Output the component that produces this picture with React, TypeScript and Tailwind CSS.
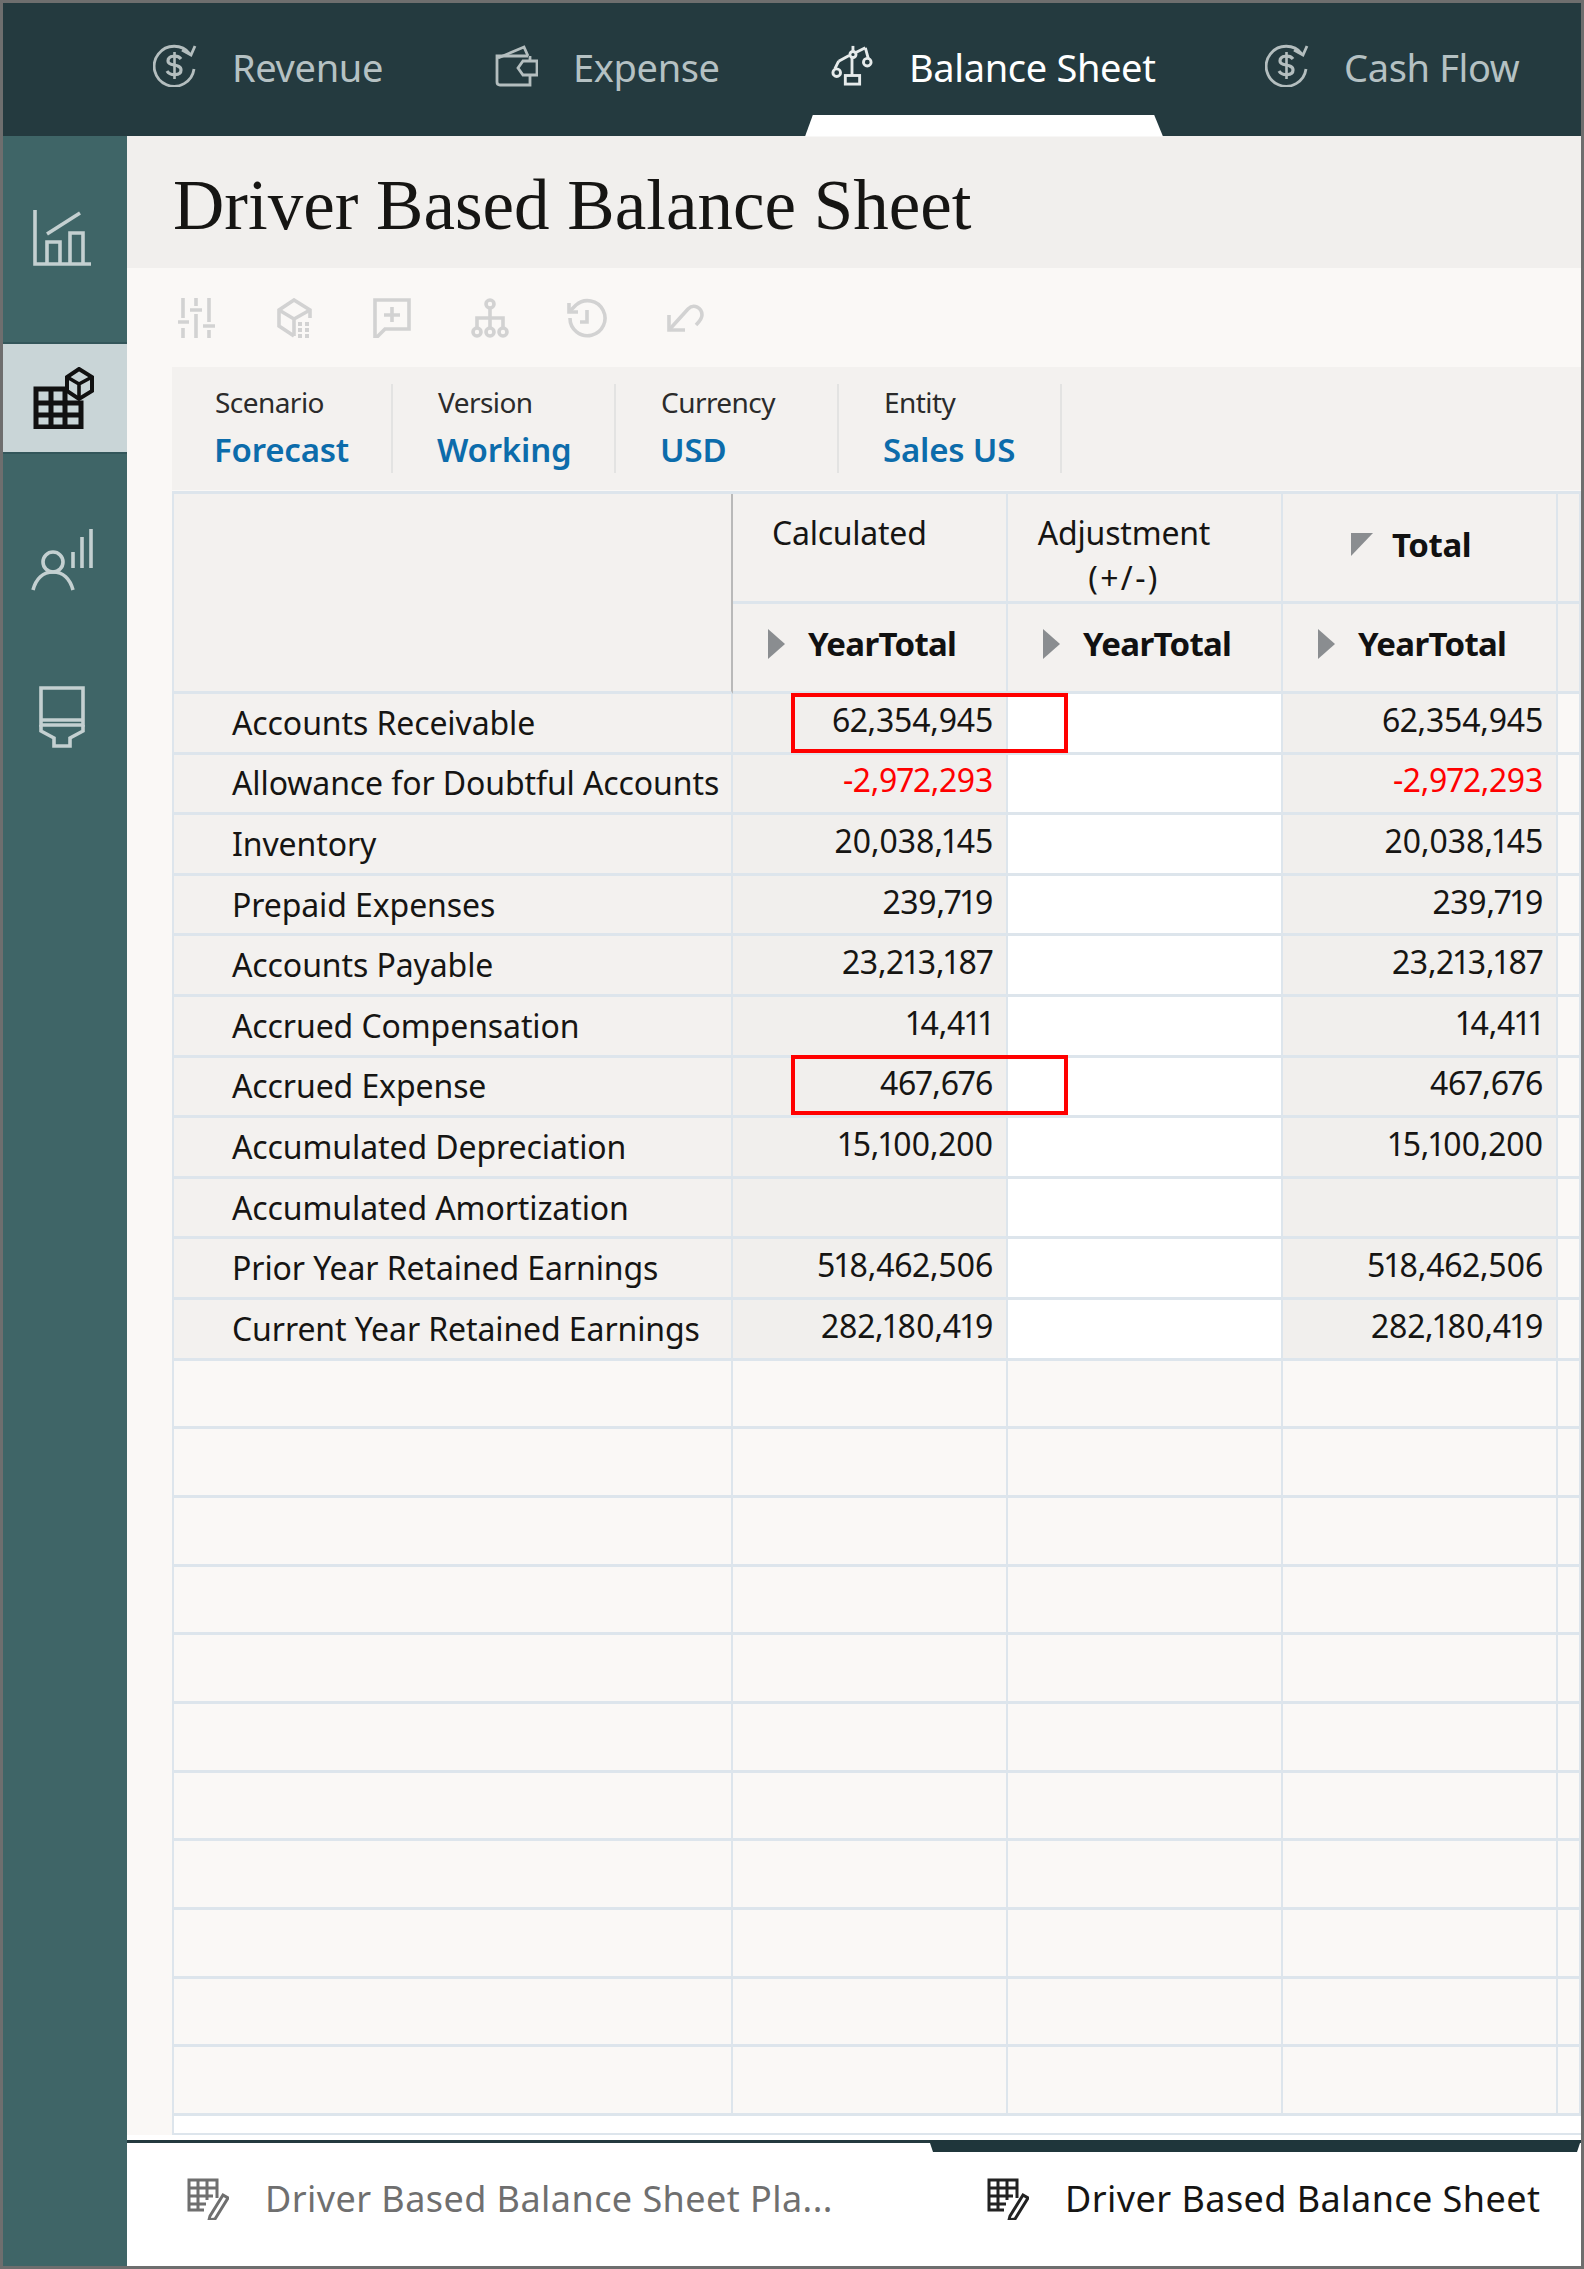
import React from "react";

const sans = "[font-family:'Noto_Sans','Open_Sans',sans-serif]";

function DollarCycle() {
  return (
    <svg viewBox="0 0 44 44" className="h-[44px] w-[44px] shrink-0 text-[#b4bebf]" fill="none" stroke="currentColor" strokeWidth="2.8">
      <path d="M37 11 A20 20 0 1 0 41 26" />
      <path d="M29 7 L38 12 L42 3" />
      <path d="M28 16 C25 12 15 12 15 18 C15 24 28 20 28 27 C28 33 17 33 14 28" strokeWidth="3.2" />
      <path d="M21.5 9 V36" strokeWidth="2.6" />
    </svg>
  );
}

function Wallet() {
  return (
    <svg viewBox="0 0 45 44" className="h-[44px] w-[45px] shrink-0 text-[#b4bebf]" fill="none" stroke="currentColor" strokeWidth="2.8">
      <path d="M5 15 L31 4 L35 13" />
      <path d="M35 13 H4 V39 C4 41 5 42 7 42 H37 V32" />
      <path d="M37 13 V18" />
      <path d="M37 18 H44 V32 H30 L25 25 L30 18 H37" />
    </svg>
  );
}

function Scale() {
  return (
    <svg viewBox="0 0 44 44" className="h-[44px] w-[42px] shrink-0 text-[#e6ebeb]" fill="none" stroke="currentColor" strokeWidth="3">
      <rect x="15" y="33" width="15" height="9" />
      <path d="M22 33 V14" />
      <circle cx="23" cy="11" r="3.2" />
      <path d="M26 9 L36 4 M19 12 L8 18" />
      <path d="M23 2 V7" />
      <path d="M8 18 L4 26 M36 4 L39 15" />
      <circle cx="6" cy="30" r="4" />
      <circle cx="38" cy="19" r="4" />
    </svg>
  );
}

function BarChart() {
  return (
    <svg viewBox="0 0 58 56" className="h-[56px] w-[58px] text-[#c4d0d1]" fill="none" stroke="currentColor" strokeWidth="3.6">
      <path d="M2 0 V54 H58" />
      <path d="M14 24 L47 3" />
      <path d="M14 54 V32 H27 V54" />
      <path d="M37 54 V23 H50 V54" />
    </svg>
  );
}

function GridCube() {
  return (
    <svg viewBox="0 0 62 62" className="h-[62px] w-[62px] text-[#111111]" fill="none" stroke="currentColor" strokeWidth="5">
      <path d="M3 22 H32 V36 H48 V60 H3 Z" />
      <path d="M3 36 H32 V60 M3 48 H48 M18 22 V60" />
      <path d="M46 2 L59 10 V24 L46 32 L34 24 V10 Z" strokeWidth="4" />
      <path d="M34 10 L46 17 L59 10 M46 17 V31" strokeWidth="3.6" />
    </svg>
  );
}

function PersonBars() {
  return (
    <svg viewBox="0 0 62 62" className="h-[62px] w-[62px] text-[#c4d0d1]" fill="none" stroke="currentColor" strokeWidth="3.6">
      <ellipse cx="22" cy="33" rx="10" ry="10" />
      <path d="M2 61 C5 50 12 43 22 43 C32 43 39 50 42 61" />
      <path d="M42 23 V39 M51 8 V39 M60 0 V39" />
    </svg>
  );
}

function Funnel() {
  return (
    <svg viewBox="0 0 48 62" className="h-[62px] w-[48px] text-[#c4d0d1]" fill="none" stroke="currentColor" strokeWidth="3.6">
      <path d="M3 2 H45 V39 H3 Z" />
      <path d="M3 39 V45 L16 52 V60 H32 V52 L45 45 V39" />
      <path d="M3 34 H45" />
    </svg>
  );
}

function ToolSliders() {
  return (
    <svg viewBox="0 0 40 40" className="h-[40px] w-[40px]" fill="none" stroke="#d2d2d2" strokeWidth="3.6">
      <path d="M6 0 V20 M6 30 V40 M1 24 H12" />
      <path d="M19 0 V8 M19 16 V40 M13 12 H25" />
      <path d="M32 0 V24 M32 32 V40 M26 28 H38" />
    </svg>
  );
}
function ToolCube() {
  return (
    <svg viewBox="0 0 36 40" className="h-[40px] w-[36px]" fill="none" stroke="#d2d2d2" strokeWidth="3.6">
      <path d="M17 38 L2 28 V12 L17 2 L33 12 V20" />
      <path d="M2 12 L17 21 L33 12 M17 21 V38" />
      <g fill="#d2d2d2" stroke="none">
        <rect x="21" y="24" width="4" height="4" /><rect x="28" y="24" width="4" height="4" />
        <rect x="21" y="30" width="4" height="4" /><rect x="28" y="30" width="4" height="4" />
        <rect x="21" y="36" width="4" height="4" /><rect x="28" y="36" width="4" height="4" />
      </g>
    </svg>
  );
}
function ToolComment() {
  return (
    <svg viewBox="0 0 38 40" className="h-[40px] w-[38px]" fill="none" stroke="#d2d2d2" strokeWidth="3.6">
      <path d="M2 2 H36 V31 H12 L4 39 H2 Z" />
      <path d="M19 9 V24 M11 17 H27" />
    </svg>
  );
}
function ToolOrg() {
  return (
    <svg viewBox="0 0 38 40" className="h-[40px] w-[38px]" fill="none" stroke="#d2d2d2" strokeWidth="3.6">
      <circle cx="19" cy="6" r="4" />
      <path d="M19 10 V20 M6 30 V20 H32 V30 M19 20 V30" />
      <circle cx="6" cy="34" r="4" /><circle cx="19" cy="34" r="4" /><circle cx="32" cy="34" r="4" />
    </svg>
  );
}
function ToolHistory() {
  return (
    <svg viewBox="0 0 40 40" className="h-[40px] w-[40px]" fill="none" stroke="#d2d2d2" strokeWidth="3.6">
      <path d="M3 20 A17.5 17.5 0 1 0 9 7 L2 14" />
      <path d="M2 5 V14 H11" />
      <path d="M20 12 V24 H13" />
    </svg>
  );
}
function ToolUndo() {
  return (
    <svg viewBox="0 0 38 30" className="h-[30px] w-[38px]" fill="none" stroke="#d2d2d2" strokeWidth="3.6">
      <path d="M3 27 L22 6 C28 0 36 5 36 12 C36 16 33 19 30 22" />
      <path d="M3 12 V27 H19" />
    </svg>
  );
}

function SheetPencil({ dark }: { dark: boolean }) {
  const c = dark ? "#222222" : "#6f6f6f";
  return (
    <svg viewBox="0 0 42 42" className="h-[42px] w-[42px] shrink-0" fill="none" stroke={c} strokeWidth="3">
      <path d="M30 20 V2 H2 V32 H17" />
      <path d="M2 10 H30 M2 18 H26 M2 26 H19 M11 2 V32 M20 2 V22" />
      <path d="M23 38 L36 17 L41 20 L28 41 L22 42 Z" />
    </svg>
  );
}

const tabText = "mt-[4px] whitespace-nowrap text-[38px] leading-[48px] tracking-[-0.35px]";

function Tab({ icon, label, w, ml }: { icon: React.ReactNode; label: string; w: string; ml: string }) {
  return (
    <div className={`flex items-center gap-[35px] ${ml}`}>
      {icon}
      <span className={`${w} ${tabText} text-[#b5c1c3]`}>{label}</span>
    </div>
  );
}

const rows = [
  ["Accounts Receivable", "62,354,945"],
  ["Allowance for Doubtful Accounts", "-2,972,293"],
  ["Inventory", "20,038,145"],
  ["Prepaid Expenses", "239,719"],
  ["Accounts Payable", "23,213,187"],
  ["Accrued Compensation", "14,411"],
  ["Accrued Expense", "467,676"],
  ["Accumulated Depreciation", "15,100,200"],
  ["Accumulated Amortization", ""],
  ["Prior Year Retained Earnings", "518,462,506"],
  ["Current Year Retained Earnings", "282,180,419"],
];

const filters = [
  ["Scenario", "Forecast"],
  ["Version", "Working"],
  ["Currency", "USD"],
  ["Entity", "Sales US"],
];

const empties = Array.from({ length: 11 }, (_, i) => i);

const cell = "border-r-2 border-b-[3px] border-[#dde5ec]";

function Triangle() {
  return <div className="h-0 w-0 shrink-0 border-y-[15px] border-l-[17px] border-y-transparent border-l-[#8a8d90]" />;
}

function YearTotal() {
  return (
    <div className={`flex items-center gap-[23px] bg-[#f3f1ef] pl-[35px] pb-[8px] ${cell}`}>
      <Triangle />
      <span className="text-[33px] font-bold leading-none tracking-[-0.7px] text-[#111]">YearTotal</span>
    </div>
  );
}

export default function App() {
  return (
    <div className={`flex h-[2269px] w-[1584px] flex-col overflow-hidden border-y-[3px] border-x-[3px] border-[#6e6e6e] bg-white ${sans}`}>
      <header className="flex h-[133px] shrink-0 items-center bg-[#243a3f] pb-[10px]">
        <Tab ml="ml-[150px]" w="w-[151px]" icon={<DollarCycle />} label="Revenue" />
        <Tab ml="ml-[110px]" w="w-[148px]" icon={<Wallet />} label="Expense" />
        <div className="relative ml-[110px] flex items-center gap-[36px]">
          <Scale />
          <span className={`w-[246px] ${tabText} text-white`}>Balance Sheet</span>
          <div className="absolute top-[76px] left-[-26px] h-[22px] w-[358px] bg-white [clip-path:polygon(8px_0,349px_0,100%_100%,0_100%)]" />
        </div>
        <Tab ml="ml-[110px]" w="w-[178px]" icon={<DollarCycle />} label="Cash Flow" />
      </header>

      <div className="flex min-h-0 flex-1">
        <aside className="flex w-[124px] shrink-0 flex-col bg-[#3f6567]">
          <div className="flex h-[206px] justify-center pt-[74px] pr-[7px]"><BarChart /></div>
          <div className="flex h-[112px] items-center justify-center border-y-2 border-[#33565a] bg-[#c9d5d7] pr-[3px]"><GridCube /></div>
          <div className="flex justify-center pt-[75px] pr-[6px]"><PersonBars /></div>
          <div className="flex justify-center pt-[95px] pr-[6px]"><Funnel /></div>
        </aside>

        <main className="flex min-w-0 flex-1 flex-col bg-[#faf8f6]">
          <div className="flex h-[132px] shrink-0 items-center bg-[#f1efed] pl-[46px] pt-[6px]">
            <h1 className="text-[71px] leading-none font-normal text-[#161513] [font-family:'Liberation_Serif',serif]">Driver Based Balance Sheet</h1>
          </div>

          <div className="flex h-[99px] shrink-0 items-center pl-[50px]">
            <ToolSliders />
            <div className="ml-[60px]"><ToolCube /></div>
            <div className="ml-[60px]"><ToolComment /></div>
            <div className="ml-[60px]"><ToolOrg /></div>
            <div className="ml-[58px]"><ToolHistory /></div>
            <div className="ml-[59px]"><ToolUndo /></div>
          </div>

          <div className="ml-[45px] flex h-[123px] shrink-0 bg-[#f3f1ef] pt-[17px]">
            {filters.map(([k, v], i) => (
              <div key={k} className={`h-[89px] border-r-2 border-[#e3e3e2] ${i === 0 ? "w-[221px] pl-[43px]" : "w-[223px] pl-[45px]"}`}>
                <div className="text-[28px] leading-[36px] tracking-[-0.55px] text-[#2b2b2b]">{k}</div>
                <div className="mt-[9px] -ml-[1px] text-[33px] font-semibold leading-[42px] tracking-[-0.2px] text-[#0c6cab]">{v}</div>
              </div>
            ))}
          </div>

          <div className="relative mt-[1px] ml-[45px] grid shrink-0 grid-cols-[559px_275px_275px_275px_1fr] grid-rows-[110px_90px] border-t-[3px] border-l-2 border-[#dde5ec] text-[32px] text-[#161513]">
            <div className="row-span-2 border-r-2 border-b-[3px] border-r-[#b9b9b9] border-b-[#dde5ec] bg-[#f3f1ef]" />
            <div className={`bg-[#f3f1ef] pl-[39px] pt-[18px] leading-[42px] tracking-[-0.25px] ${cell}`}>Calculated</div>
            <div className={`bg-[#f3f1ef] pt-[16px] text-center leading-[45px] tracking-[-0.2px] ${cell}`}>
              <div className="pr-[41px]">Adjustment</div>
              <div className="pr-[41px] tracking-[2.4px]">(+/-)</div>
            </div>
            <div className={`flex items-center bg-[#f3f1ef] pl-[68px] pb-[6px] ${cell}`}>
              <div className="h-0 w-0 border-t-[23px] border-r-[22px] border-t-[#8a8d90] border-r-transparent" />
              <span className="ml-[19px] text-[33px] font-bold tracking-[-0.4px] text-[#111]">Total</span>
            </div>
            <div className={`bg-[#f3f1ef] ${cell}`} />
            <YearTotal />
            <YearTotal />
            <YearTotal />
            <div className={`bg-[#f3f1ef] ${cell}`} />

            {rows.map(([label, value]) => {
              const neg = value.startsWith("-");
              return (
                <React.Fragment key={label}>
                  <div className={`flex h-[60.6px] items-center whitespace-nowrap bg-[#f3f1ef] pl-[58px] tracking-[-0.1px] ${cell}`}>{label}</div>
                  <div className={`flex items-center justify-end bg-[#f1efed] pr-[13px] pb-[6px] tracking-[-0.2px] proportional-nums ${neg ? "text-[#ff0000]" : ""} ${cell}`}>{value}</div>
                  <div className={`bg-white ${cell}`} />
                  <div className={`flex items-center justify-end bg-[#f1efed] pr-[13px] pb-[6px] tracking-[-0.2px] proportional-nums ${neg ? "text-[#ff0000]" : ""} ${cell}`}>{value}</div>
                  <div className={cell} />
                </React.Fragment>
              );
            })}

            {empties.map((i) => (
              <React.Fragment key={i}>
                <div className={`h-[68.7px] ${cell}`} />
                <div className={cell} />
                <div className={cell} />
                <div className={cell} />
                <div className={cell} />
              </React.Fragment>
            ))}

            <div className="col-span-5 h-[19px] border-b-2 border-[#dde5ec] bg-white" />

            <div className="pointer-events-none absolute top-[199px] left-[617px] h-[60px] w-[277px] border-4 border-[#ff0000]" />
            <div className="pointer-events-none absolute top-[561px] left-[617px] h-[60px] w-[277px] border-4 border-[#ff0000]" />
          </div>

          <div className="h-[5px] shrink-0 bg-white" />

          <footer className="relative flex flex-1 items-center border-t-[3px] border-[#243a3f] bg-white pb-[12px] pl-[60px] text-[36px]">
            <div className="absolute top-[-3px] right-0 h-[12px] w-[652px] bg-[#1f363b] [clip-path:polygon(0_0,100%_0,calc(100%-4px)_100%,4px_100%)]" />
            <div className="flex w-[800px] items-center gap-[36px] text-[#6f6f6f]">
              <SheetPencil dark={false} />
              <span className="tracking-[0.44px]">Driver Based Balance Sheet Pla...</span>
            </div>
            <div className="flex items-center gap-[36px] text-[#161513]">
              <SheetPencil dark />
              <span className="tracking-[0.45px]">Driver Based Balance Sheet</span>
            </div>
          </footer>
        </main>
      </div>
    </div>
  );
}
